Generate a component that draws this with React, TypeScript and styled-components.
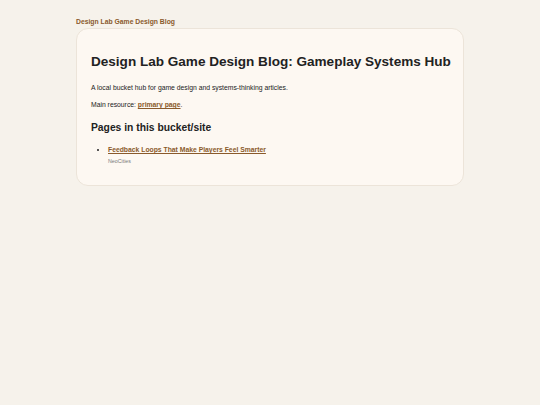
import React from "react";
import styled, { createGlobalStyle } from "styled-components";

const GlobalStyle = createGlobalStyle`
  html, body {
    margin: 0;
    padding: 0;
    background: #f6f2eb;
  }
  body {
    font-family: "Liberation Sans", Arial, sans-serif;
    color: #222;
  }
`;

const Page = styled.div`
  width: 388px;
  margin: 0 auto;
  padding-top: 17px;
`;

const Brand = styled.a`
  display: block;
  font-size: 6.8px;
  font-weight: bold;
  color: #8a5a2b;
  text-decoration: none;
  line-height: 9px;
  margin-bottom: 2px;
`;

const Card = styled.main`
  background: #fdf8f2;
  border: 1px solid #ece4d9;
  border-radius: 12px;
  padding: 24px 14px 20px 14px;
`;

const Title = styled.h1`
  margin: 0 0 12px 0;
  font-size: 13.55px;
  line-height: 18px;
  font-weight: bold;
  color: #222;
  white-space: nowrap;
`;

const Text = styled.p`
  margin: 0 0 8px 0;
  font-size: 6.8px;
  line-height: 9px;
`;

const Link = styled.a`
  color: #8a5a2b;
  font-weight: bold;
  text-decoration: underline;
`;

const SubTitle = styled.h2`
  margin: 12px 0 11px 0;
  font-size: 10.3px;
  line-height: 13px;
  font-weight: bold;
`;

const List = styled.ul`
  margin: 0;
  padding-left: 17px;
  font-size: 6.8px;
  line-height: 9px;
`;

const Item = styled.li``;

const Meta = styled.div`
  font-size: 5.3px;
  line-height: 8px;
  color: #7a7a7a;
  margin-top: 2.5px;
`;

export default function App() {
  return (
    <>
      <GlobalStyle />
      <Page>
        <Brand href="#">Design Lab Game Design Blog</Brand>
        <Card>
          <Title>Design Lab Game Design Blog: Gameplay Systems Hub</Title>
          <Text>A local bucket hub for game design and systems-thinking articles.</Text>
          <Text>
            Main resource: <Link href="#">primary page</Link>.
          </Text>
          <SubTitle>Pages in this bucket/site</SubTitle>
          <List>
            <Item>
              <Link href="#">Feedback Loops That Make Players Feel Smarter</Link>
              <Meta>NeoCities</Meta>
            </Item>
          </List>
        </Card>
      </Page>
    </>
  );
}
